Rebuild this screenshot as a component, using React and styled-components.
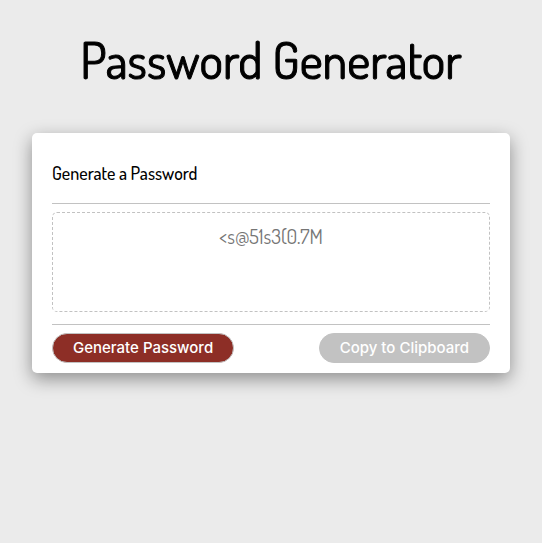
import React, { useState } from "react";
import styled, { createGlobalStyle } from "styled-components";

const GlobalStyle = createGlobalStyle`
  * { box-sizing: border-box; }
  body {
    margin: 0;
    background: #ebebeb;
    color: #000;
    font-family: Dosis, Lato, sans-serif;
  }
`;

const Page = styled.main`
  padding: 0 32px 32px;
`;

const Title = styled.h1`
  margin: 0;
  padding: 28px 0 41px;
  font-size: 50px;
  line-height: 64px;
  font-weight: 400;
  -webkit-text-stroke: 1px currentColor;
  text-align: center;
`;

const Card = styled.section`
  max-width: 796px;
  margin: 0 auto;
  padding: 0 20px 10px;
  border-radius: 5px;
  background: #fff;
  box-shadow: 0 6px 18px rgba(0, 0, 0, 0.4);
`;

const CardHeader = styled.header`
  padding: 28px 0 18px;
  border-bottom: 1px solid #c2c2c2;
`;

const CardTitle = styled.h2`
  margin: 0;
  font-size: 18px;
  line-height: 24px;
  font-weight: 500;
`;

const CardBody = styled.div`
  padding: 8px 0 12px;
`;

const PasswordBox = styled.textarea`
  display: block;
  width: 100%;
  height: 100px;
  padding: 11px;
  resize: none;
  overflow: hidden;
  border: 1px dashed #c2c2c2;
  border-radius: 5px;
  background: transparent;
  color: #757575;
  font-family: inherit;
  font-size: 20px;
  line-height: 24px;
  font-weight: 400;
  text-align: center;
`;

const CardFooter = styled.footer`
  display: flex;
  justify-content: space-between;
  gap: 12px;
  padding-top: 8px;
  border-top: 1px solid #c2c2c2;
`;

const PillButton = styled.button`
  height: 30px;
  padding: 0 20px;
  border: 1px solid #c2c2c2;
  border-radius: 15px;
  background: ${({ $tone }) => ($tone === "primary" ? "#8d2e26" : "#c2c2c2")};
  color: #fff;
  font-family: Inter, sans-serif;
  font-size: 15px;
  line-height: 24px;
  font-weight: 500;
  white-space: nowrap;
  cursor: pointer;
`;

const CHARACTERS =
  "abcdefghijklmnopqrstuvwxyzABCDEFGHIJKLMNOPQRSTUVWXYZ0123456789<>@().!#$%&*";

function createPassword(length) {
  const values = crypto.getRandomValues(new Uint32Array(length));
  return Array.from(values, (v) => CHARACTERS[v % CHARACTERS.length]).join("");
}

export default function App() {
  const [password, setPassword] = useState("<s@51s3(0.7M");

  return (
    <>
      <GlobalStyle />
      <Page>
        <Title>Password Generator</Title>
        <Card>
          <CardHeader>
            <CardTitle id="card-title">Generate a Password</CardTitle>
          </CardHeader>
          <CardBody>
            <PasswordBox readOnly value={password} aria-labelledby="card-title" />
          </CardBody>
          <CardFooter>
            <PillButton
              type="button"
              $tone="primary"
              onClick={() => setPassword(createPassword(12))}
            >
              Generate Password
            </PillButton>
            <PillButton
              type="button"
              onClick={() => navigator.clipboard.writeText(password)}
            >
              Copy to Clipboard
            </PillButton>
          </CardFooter>
        </Card>
      </Page>
    </>
  );
}
